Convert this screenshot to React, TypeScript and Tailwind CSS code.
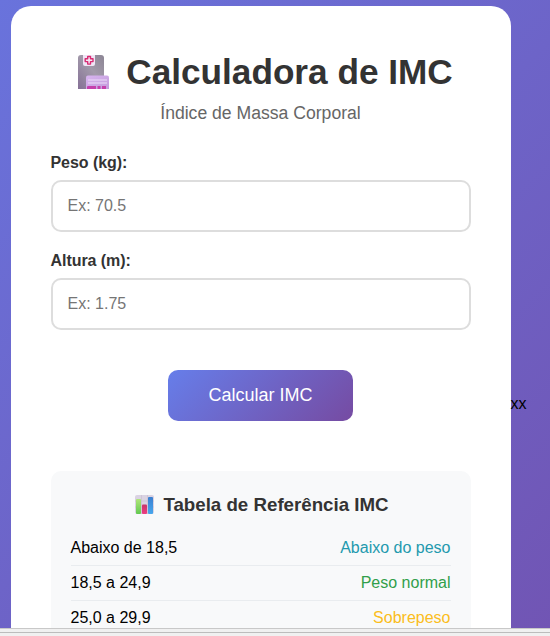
import React from "react";

const rows = [
  { range: "Abaixo de 18,5", label: "Abaixo do peso", color: "text-[#2399ae]" },
  { range: "18,5 a 24,9", label: "Peso normal", color: "text-[#319f4a]" },
  { range: "25,0 a 29,9", label: "Sobrepeso", color: "text-[#fbbd20]" },
];

function HospitalIcon() {
  return (
    <svg width="31" height="34" viewBox="0 0 31 34" className="shrink-0" aria-hidden="true">
      <defs>
        <linearGradient id="tower" x1="0" y1="1" x2="1" y2="0">
          <stop offset="0" stopColor="#857096" />
          <stop offset=".55" stopColor="#a29aaa" />
          <stop offset="1" stopColor="#8c8594" />
        </linearGradient>
        <linearGradient id="wing" x1="0" y1="0" x2="1" y2="1">
          <stop offset="0" stopColor="#d7b5ef" />
          <stop offset="1" stopColor="#c49bdc" />
        </linearGradient>
      </defs>
      <path d="M0 34V3q0-3 3-3h20q3 0 3 3v31z" fill="url(#tower)" />
      <path d="M5 0h12v9q0 2-2 2H7q-2 0-2-2z" fill="#f0e5f5" />
      <path d="M9.700 1.500h2.800v2.300H15v2.800h-2.500v2.500H9.700V6.600H7.200V3.800h2.500z" fill="#f4e8f3" stroke="#d82b72" strokeWidth="1.400" strokeLinejoin="round" />
      <path d="M8 34V22.500q0-2 2-2h19q2 0 2 2V34z" fill="url(#wing)" />
      <path d="M10 25h19M10 28h19" stroke="#eddcf8" strokeWidth="1" />
      <path d="M9 34v-2q0-1 1-1h8v3zm10.500 0v-3h3v3zm4.500 0v-3h4v3z" fill="#c540ac" />
    </svg>
  );
}

function ChartIcon() {
  return (
    <svg width="19" height="19" viewBox="0 0 19 19" className="shrink-0" aria-hidden="true">
      <defs>
        <linearGradient id="green" x2="0" y2="1">
          <stop stopColor="#b0e57a" />
          <stop offset="1" stopColor="#62c950" />
        </linearGradient>
        <linearGradient id="pink" x2="0" y2="1">
          <stop stopColor="#c73568" />
          <stop offset="1" stopColor="#ed3e82" />
        </linearGradient>
        <linearGradient id="blue" x2="0" y2="1">
          <stop stopColor="#3b7fd0" />
          <stop offset="1" stopColor="#47a7ed" />
        </linearGradient>
      </defs>
      <rect width="19" height="19" rx="2" fill="#dad3e2" />
      <path d="M6.500 0v19M12.500 0v19M0 6h19M0 12h19" stroke="#c6bdcf" strokeWidth=".6" />
      <rect x="1" y="4" width="5" height="15" rx="1" fill="url(#green)" />
      <rect x="7" y="9.500" width="5" height="9.500" rx="1" fill="url(#pink)" />
      <rect x="13" y="2" width="5" height="17" rx="1" fill="url(#blue)" />
    </svg>
  );
}

function Field({ label, placeholder, id }: { label: string; placeholder: string; id: string }) {
  return (
    <div className="flex flex-col gap-2">
      <label htmlFor={id} className="-ml-[0.5px] h-[18px] text-base leading-[18px] font-bold tracking-[-0.05px] text-[#333]">{label}</label>
      <input
        id={id}
        placeholder={placeholder}
        className="h-[52px] w-full rounded-[10px] border-2 border-[#ddd] bg-white px-[14.5px] text-base outline-none placeholder:text-[#757575]"
      />
    </div>
  );
}

export default function App() {
  return (
    <div className="flex h-[636px] w-[550px] flex-col overflow-hidden font-['Liberation_Sans',Arial,sans-serif]">
      <div className="flex h-[628px] overflow-hidden bg-[linear-gradient(135deg,#6973dc_0%,#7155b4_100%)] pt-[6px] pl-[11px]">
        <main className="h-[800px] w-[500px] shrink-0 rounded-[20px] bg-white px-10 pt-10">
          <h1 className="flex h-[51px] items-center justify-center gap-[17px] pt-[1px] pl-[9px] text-[35.2px] leading-[40px] font-bold whitespace-nowrap text-[#333]">
            <HospitalIcon />
            <span>Calculadora de IMC</span>
          </h1>
          <p className="mt-[6px] pr-[1px] text-center text-[17.6px] leading-5 text-[#666]">Índice de Massa Corporal</p>
          <form className="mt-[31px] flex flex-col gap-5">
            <Field id="peso" label="Peso (kg):" placeholder="Ex: 70.5" />
            <Field id="altura" label="Altura (m):" placeholder="Ex: 1.75" />
            <button type="button" className="mt-5 mr-[118px] h-[51px] w-[185px] self-end rounded-[10px] bg-[linear-gradient(135deg,#667eea_0%,#764ba2_100%)] text-[18px] text-white">
              Calcular IMC
            </button>
          </form>
          <section className="mt-[50px] h-[260px] rounded-[10px] bg-[#f8f9fa] pt-[23px] pr-[20.5px] pl-[19.5px]">
            <h2 className="flex h-[21px] items-center justify-center gap-[9px] pl-[3px] text-[18.72px] leading-[21px] font-bold text-[#333]">
              <ChartIcon />
              <span>Tabela de Referência IMC</span>
            </h2>
            <div className="mt-[16px]">
              {rows.map((row) => (
                <div key={row.range} className="flex h-[35px] items-center justify-between border-b border-[#e9ecef] text-base">
                  <span className="text-black">{row.range}</span>
                  <span className={row.color}>{row.label}</span>
                </div>
              ))}
            </div>
          </section>
        </main>
        <span className="mt-[389px] -ml-[0.5px] h-[18px] text-base leading-[18px] text-black">xx</span>
      </div>
      <div className="h-[8px] shrink-0 border-t border-[#c8c8c8] bg-[#f0f0f0] pt-[3px]">
        <div className="h-px bg-[#bcbcbc]" />
      </div>
    </div>
  );
}
